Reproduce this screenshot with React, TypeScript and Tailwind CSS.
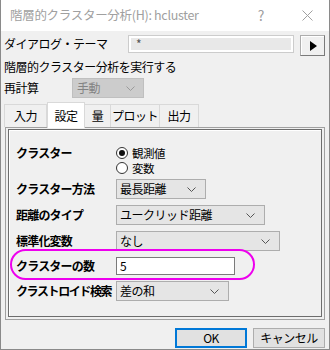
import React from "react";

const FONT = '"Noto Sans CJK JP", "Noto Sans", sans-serif';

function Chevron({ color = "#555" }: { color?: string }) {
  return (
    <svg width="9" height="5" viewBox="0 0 9 5" className="shrink-0">
      <path d="M0.5 0.5 L4.5 4.5 L8.5 0.5" fill="none" stroke={color} strokeWidth="1" />
    </svg>
  );
}

function Dropdown({ w, text }: { w: string; text: string }) {
  return (
    <div
      className={`${w} h-[20px] bg-[#e5e5e5] border border-[#adadad] flex items-center justify-between pl-[3px] pr-[9px] text-black`}
    >
      <span className="leading-none whitespace-nowrap">{text}</span>
      <Chevron />
    </div>
  );
}

function Radio({ checked, label }: { checked: boolean; label: string }) {
  return (
    <div className="h-[15px] flex items-center gap-[4px]">
      <div className="w-[12px] h-[12px] rounded-full border border-[#333] bg-white flex items-center justify-center">
        {checked && <div className="w-[6px] h-[6px] rounded-full bg-[#111]" />}
      </div>
      <span className="leading-[14px] text-[11.5px]">{label}</span>
    </div>
  );
}

function Row({
  label,
  children,
  mt,
  track = "tracking-[-0.8px]",
}: {
  label: string;
  children: React.ReactNode;
  mt: string;
  track?: string;
}) {
  return (
    <div className={`${mt} flex items-center`}>
      <div className={`w-[107px] pl-[7px] font-bold leading-none whitespace-nowrap ${track}`}>{label}</div>
      {children}
    </div>
  );
}

export default function App() {
  return (
    <div
      className="w-[330px] h-[350px] bg-[#f0f0f0] border-l border-r border-b border-[#8a8a8a] relative flex flex-col text-[12px] tracking-[-0.5px] text-black"
      style={{ fontFamily: FONT }}
    >
      {/* title bar */}
      <div className="h-[31px] bg-white flex items-center pl-[9px] pr-[16px] text-[#a0a0a0] shrink-0">
        <span className="flex-1 text-[12.5px] tracking-[-0.3px]">階層的クラスター分析(H): hcluster</span>
        <span className="text-[14px] mr-[38px]">?</span>
        <svg width="11" height="11" viewBox="0 0 11 11">
          <path d="M0.5 0.5 L10.5 10.5 M10.5 0.5 L0.5 10.5" stroke="#a0a0a0" strokeWidth="1" />
        </svg>
      </div>

      {/* theme row */}
      <div className="mt-[4px] h-[21px] flex items-start">
        <div className="w-[127px] pl-[3px] leading-[18px]">ダイアログ・テーマ</div>
        <div className="w-[166px] h-[18px] border border-[#cccccc] bg-[#e8e8e8] shadow-[inset_0_0_0_2px_#ffffff] flex items-center pl-[7px] text-[#555]">
          *
        </div>
        <div className="ml-[6px] w-[25px] h-[21px] bg-[#f0f0f0] border border-[#adadad] border-r-[#7a7a7a] border-b-[#7a7a7a] shadow-[inset_1px_1px_0_#ffffff] flex items-center justify-center">
          <svg width="8" height="10" viewBox="0 0 8 10">
            <path d="M1 0 L8 5 L1 10 Z" fill="#000" />
          </svg>
        </div>
      </div>

      <div className="mt-[3px] h-[16px] pl-[3px] leading-[16px]">階層的クラスター分析を実行する</div>

      <div className="mt-[3px] h-[20px] flex items-center">
        <div className="w-[71px] pl-[3px] leading-none">再計算</div>
        <div className="w-[72px] h-[20px] bg-[#cccccc] border border-[#bfbfbf] flex items-center justify-between pl-[4px] pr-[8px] text-[#838383]">
          <span className="leading-none">手動</span>
          <Chevron color="#9a9a9a" />
        </div>
      </div>

      {/* tabs */}
      <div className="mt-[4px] h-[25px] flex items-end pl-[3px] relative z-10">
        <div className="w-[43px] h-[23px] border border-b-0 border-[#d9d9d9] flex items-center justify-center">入力</div>
        <div className="w-[38px] h-[26px] -mb-[1px] bg-white border border-b-0 border-[#d9d9d9] flex items-center justify-center pt-[1px]">設定</div>
        <div className="w-[26px] h-[23px] border border-b-0 border-l-0 border-[#d9d9d9] flex items-center justify-center">量</div>
        <div className="w-[49px] h-[23px] border border-b-0 border-l-0 border-[#d9d9d9] flex items-center justify-center">プロット</div>
        <div className="w-[39px] h-[23px] border border-b-0 border-l-0 border-[#d9d9d9] flex items-center justify-center">出力</div>
      </div>

      {/* tab page */}
      <div className="ml-[4px] w-[320px] h-[193px] border border-[#a0a0a0] pt-[1px] px-[2px] pb-[2px]">
        <div className="h-full border border-[#6d6d6d] shadow-[inset_1px_1px_0_#ffffff]">
          <div className="pt-[15px] flex items-start">
            <div className="w-[107px] pl-[7px] font-bold leading-[15px] tracking-[-0.8px]">クラスター</div>
            <div className="flex flex-col">
              <Radio checked label="観測値" />
              <Radio checked={false} label="変数" />
            </div>
          </div>
          <Row label="クラスター方法" mt="mt-[4px]">
            <Dropdown w="w-[90px]" text="最長距離" />
          </Row>
          <Row label="距離のタイプ" mt="mt-[6px]">
            <Dropdown w="w-[149px]" text="ユークリッド距離" />
          </Row>
          <Row label="標準化変数" mt="mt-[6px]">
            <Dropdown w="w-[164px]" text="なし" />
          </Row>
          <Row label="クラスターの数" mt="mt-[6px]">
            <div className="w-[119px] h-[18px] bg-white border border-[#7a7a7a] flex items-center pl-[3px] leading-none">5</div>
          </Row>
          <Row label="クラストロイド検索" mt="mt-[6px]" track="tracking-[-1.4px]">
            <Dropdown w="w-[113px]" text="差の和" />
          </Row>
        </div>
      </div>

      {/* buttons */}
      <div className="mt-[8px] flex justify-end pr-[4px] gap-[6px]">
        <div className="w-[72px] h-[20px] bg-[#e1e1e1] border-2 border-[#0078d7] flex items-center justify-center leading-none">OK</div>
        <div className="w-[72px] h-[20px] bg-[#e1e1e1] border border-[#adadad] flex items-center justify-center leading-none">キャンセル</div>
      </div>

      {/* magenta highlight */}
      <div className="absolute left-[9px] top-[249px] w-[245px] h-[31px] rounded-full border-[2px] border-[#ee00ee] pointer-events-none" />
    </div>
  );
}
